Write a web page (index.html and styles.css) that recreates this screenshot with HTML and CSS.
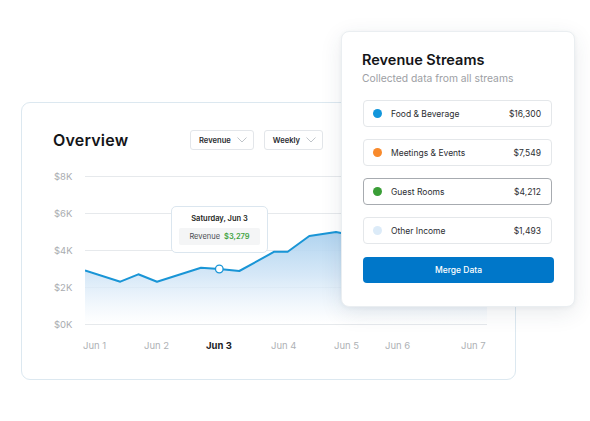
FILE: index.html
```html
<!DOCTYPE html>
<html lang="en">
<head>
<meta charset="utf-8">
<title>Revenue Overview</title>
<link rel="stylesheet" href="styles.css">
</head>
<body>
<div class="stage">
  <section class="card">
    <header class="card-head">
      <h2 class="card-title">Overview</h2>
      <button class="select">Revenue <svg class="chev" viewBox="0 0 10 6" width="10" height="6"><path d="M0.5 0.5 L5 5 L9.5 0.5" fill="none" stroke="#b9bec4" stroke-width="0.9"/></svg></button>
      <button class="select">Weekly <svg class="chev" viewBox="0 0 10 6" width="10" height="6"><path d="M0.5 0.5 L5 5 L9.5 0.5" fill="none" stroke="#b9bec4" stroke-width="0.9"/></svg></button>
    </header>
    <div class="chart">
      <div class="y-axis">
        <span>$8K</span><span>$6K</span><span>$4K</span><span>$2K</span><span>$0K</span>
      </div>
      <svg class="plot" viewBox="0 0 402 149" width="402" height="149">
        <defs>
          <linearGradient id="fill" x1="0" y1="0" x2="0" y2="1">
            <stop offset="0" stop-color="#9fcaec" stop-opacity="1"/>
            <stop offset="0.55" stop-color="#cfe4f6" stop-opacity="0.85"/>
            <stop offset="1" stop-color="#ffffff" stop-opacity="0.6"/>
          </linearGradient>
        </defs>
        <g stroke="#e6e9ec" stroke-width="1">
          <line x1="0" y1="0.5" x2="402" y2="0.5"/>
          <line x1="0" y1="37.5" x2="402" y2="37.5"/>
          <line x1="0" y1="74.5" x2="402" y2="74.5"/>
          <line x1="0" y1="111.5" x2="402" y2="111.5"/>
          <line x1="0" y1="148.5" x2="402" y2="148.5"/>
        </g>
        <path d="M0 94.5 L35.3 105.7 L53.3 98.3 L72 105.7 L116 91.7 L134.3 93 L154.3 95 L189.3 75.7 L202.7 75.7 L224.3 60 L251 56 L256 57 L300 50 L350 44 L402 40 L402 148 L0 148 Z" fill="url(#fill)"/>
        <path d="M0 94.5 L35.3 105.7 L53.3 98.3 L72 105.7 L116 91.7 L134.3 93 L154.3 95 L189.3 75.7 L202.7 75.7 L224.3 60 L251 56 L256 57 L300 50 L350 44 L402 40" fill="none" stroke="#1995d6" stroke-width="2" stroke-linejoin="round"/>
        <circle cx="134.3" cy="93" r="3.8" fill="#fff" stroke="#1995d6" stroke-width="1.3"/>
      </svg>
    </div>
    <div class="x-axis">
      <span style="left:61px">Jun 1</span>
      <span style="left:122px">Jun 2</span>
      <span class="active" style="left:184px">Jun 3</span>
      <span style="left:249px">Jun 4</span>
      <span style="left:312px">Jun 5</span>
      <span style="left:363px">Jun 6</span>
      <span style="left:439px">Jun 7</span>
    </div>
    <div class="tooltip">
      <div class="tip-date">Saturday, Jun 3</div>
      <div class="tip-row">Revenue <b>$3,279</b></div>
    </div>
  </section>

  <aside class="panel">
    <h3 class="panel-title">Revenue Streams</h3>
    <p class="panel-sub">Collected data from all streams</p>
    <ul class="streams">
      <li class="stream"><i class="dot dot-blue"></i><span class="name">Food &amp; Beverage</span><span class="val">$16,300</span></li>
      <li class="stream"><i class="dot dot-orange"></i><span class="name">Meetings &amp; Events</span><span class="val">$7,549</span></li>
      <li class="stream selected"><i class="dot dot-green"></i><span class="name">Guest Rooms</span><span class="val">$4,212</span></li>
      <li class="stream"><i class="dot dot-light"></i><span class="name">Other Income</span><span class="val">$1,493</span></li>
    </ul>
    <button class="merge">Merge Data</button>
  </aside>
</div>
</body>
</html>
```

FILE: styles.css
```css
* { box-sizing: border-box; }
html, body { margin: 0; padding: 0; background: #fff; }
body {
  font-family: Inter, "Open Sans", Arial, sans-serif;
  color: #1d1f22;
  width: 590px;
  height: 421px;
  overflow: hidden;
}
.stage {
  position: relative;
  width: 590px;
  height: 421px;
  padding: 102px 0 0 21px;
}
.card {
  position: relative;
  width: 495px;
  height: 278px;
  border: 1px solid #dce8f0;
  border-radius: 9px;
  background: #fff;
}
.card-head {
  display: flex;
  align-items: center;
  margin-top: 27px;
  padding-left: 31px;
  height: 20px;
}
.card-title {
  margin: 0;
  flex: 0 0 137px;
  font-size: 16px;
  font-weight: 600;
  letter-spacing: 0.2px;
  color: #141518;
}
.select {
  display: flex;
  align-items: center;
  gap: 6px;
  height: 20px;
  padding: 0 6px 0 8px;
  margin-right: 10px;
  border: 1px solid #e3e6ea;
  border-radius: 3px;
  background: #fff;
  font-family: inherit;
  font-size: 7.6px;
  font-weight: 600;
  color: #2a2c30;
}
.chev { display: block; }
.chart {
  display: flex;
  margin-top: 26px;
  padding-left: 32px;
}
.y-axis {
  width: 31px;
  display: flex;
  flex-direction: column;
  gap: 25px;
  margin-top: -5px;
}
.y-axis span {
  height: 12px;
  line-height: 12px;
  font-size: 9.5px;
  color: #a9acb0;
}
.plot { display: block; }
.x-axis {
  position: relative;
  height: 20px;
  margin-top: 8px;
}
.x-axis span {
  position: absolute;
  top: 0;
  font-size: 9.5px;
  color: #aeb1b5;
  line-height: 14px;
}
.x-axis span.active {
  color: #1b1c1f;
  font-weight: 700;
}
.tooltip {
  position: absolute;
  left: 149px;
  top: 103px;
  width: 97px;
  height: 47px;
  border: 1px solid #dbe6ef;
  border-radius: 5px;
  background: #fff;
  padding: 6px 7px 0 7px;
}
.tip-date {
  text-align: center;
  font-size: 7.5px;
  font-weight: 600;
  color: #1d1f22;
  line-height: 11px;
}
.tip-row {
  margin-top: 4px;
  height: 17px;
  background: #f4f5f6;
  border-radius: 2px;
  display: flex;
  align-items: center;
  justify-content: center;
  gap: 4px;
  font-size: 7.5px;
  color: #4a4d52;
}
.tip-row b { color: #43a443; font-weight: 600; }

.panel {
  position: absolute;
  left: 341px;
  top: 31px;
  width: 234px;
  height: 276px;
  background: #fff;
  border: 1px solid #eaeef1;
  border-radius: 8px;
  box-shadow: 0 6px 22px rgba(40, 60, 80, 0.10), 0 1px 4px rgba(40, 60, 80, 0.05);
  padding: 19px 22px 0 20px;
}
.panel-title {
  margin: 0;
  font-size: 14.5px;
  font-weight: 600;
  color: #141518;
  line-height: 18px;
}
.panel-sub {
  margin: 2px 0 0 0;
  font-size: 10.3px;
  color: #9da0a4;
  line-height: 14px;
}
.streams {
  list-style: none;
  margin: 15px 0 0 1px;
  padding: 0;
  display: flex;
  flex-direction: column;
  gap: 12px;
}
.stream {
  display: flex;
  align-items: center;
  height: 27px;
  border: 1px solid #e4e7ea;
  border-radius: 4px;
  padding: 0 10px 0 9px;
  font-size: 8.5px;
  color: #2c2e32;
}
.stream.selected { border-color: #a7abb0; }
.dot {
  width: 9px;
  height: 9px;
  border-radius: 50%;
  margin-right: 9px;
}
.dot-blue { background: #1296db; }
.dot-orange { background: #f88a2c; }
.dot-green { background: #3a9e37; }
.dot-light { background: #dcebf8; }
.name { flex: 1; }
.val { color: #2c2e32; }
.merge {
  display: block;
  width: 191px;
  height: 26px;
  margin: 13px 0 0 1px;
  border: 0;
  border-radius: 4px;
  background: #0077c9;
  color: #fff;
  font-family: inherit;
  font-size: 8.5px;
  font-weight: 500;
}
```
